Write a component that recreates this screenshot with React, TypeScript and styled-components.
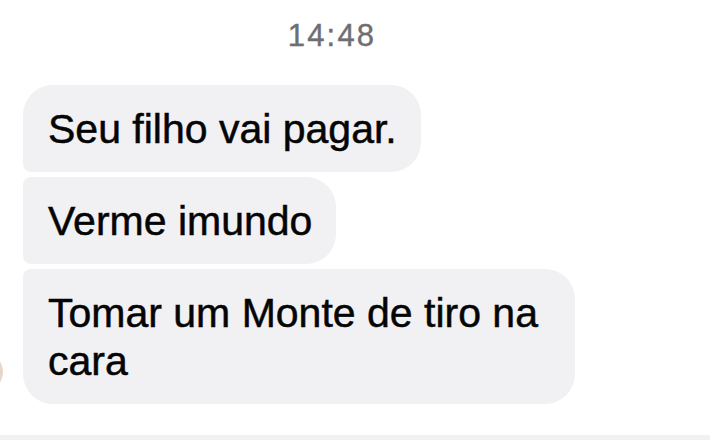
import React from "react";
import styled, { createGlobalStyle, css } from "styled-components";

const Global = createGlobalStyle`
  html, body {
    margin: 0;
    padding: 0;
    background: #ffffff;
    width: 710px;
    height: 440px;
    overflow: hidden;
  }
  body {
    font-family: "Liberation Sans", Arial, Helvetica, sans-serif;
    -webkit-font-smoothing: antialiased;
  }
`;

const Screen = styled.div`
  width: 710px;
  height: 440px;
  display: flex;
  flex-direction: column;
  background: #ffffff;
  overflow: hidden;
`;

const TimeRow = styled.div`
  display: flex;
  justify-content: center;
  padding: 18px 46px 0 0;
`;

const TimeStamp = styled.span`
  font-size: 31px;
  line-height: 36px;
  letter-spacing: 2.2px;
  color: #6e6e73;
  -webkit-text-stroke: 0.4px #6e6e73;
`;

const Group = styled.div`
  position: relative;
  display: flex;
  flex-direction: column;
  align-items: flex-start;
  gap: 5px;
  margin-top: 31px;
  padding-left: 23px;
`;

type Pos = "first" | "middle" | "last";

const Bubble = styled.div<{ $pos: Pos }>`
  box-sizing: border-box;
  max-width: 552px;
  padding: 20px 24px 19px 25px;
  background: #f1f1f3;
  color: #050505;
  font-size: 41px;
  line-height: 48px;
  -webkit-text-stroke: 0.5px #050505;
  border-radius: 30px;
  ${({ $pos }) =>
    $pos === "first" &&
    css`
      border-bottom-left-radius: 8px;
    `}
  ${({ $pos }) =>
    $pos === "middle" &&
    css`
      border-top-left-radius: 8px;
      border-bottom-left-radius: 8px;
    `}
  ${({ $pos }) =>
    $pos === "last" &&
    css`
      border-top-left-radius: 8px;
      padding-right: 34px;
    `}
`;

const Avatar = styled.div`
  position: absolute;
  left: -35px;
  bottom: 12px;
  width: 38px;
  height: 40px;
  border-radius: 50%;
  background: radial-gradient(circle at 80% 50%, #c9a58a 0%, #efe2d6 70%);
  opacity: 0.55;
`;

const Spacer = styled.div`
  flex: 1;
`;

const BottomBand = styled.div`
  height: 5px;
  background: #f1f1f2;
`;

const messages: { text: string; pos: Pos }[] = [
  { text: "Seu filho vai pagar.", pos: "first" },
  { text: "Verme imundo", pos: "middle" },
  { text: "Tomar um Monte de tiro na cara", pos: "last" },
];

export default function App() {
  return (
    <>
      <Global />
      <Screen>
        <TimeRow>
          <TimeStamp>14:48</TimeStamp>
        </TimeRow>
        <Group>
          <Avatar />
          {messages.map((m) => (
            <Bubble key={m.text} $pos={m.pos}>
              {m.text}
            </Bubble>
          ))}
        </Group>
        <Spacer />
        <BottomBand />
      </Screen>
    </>
  );
}
